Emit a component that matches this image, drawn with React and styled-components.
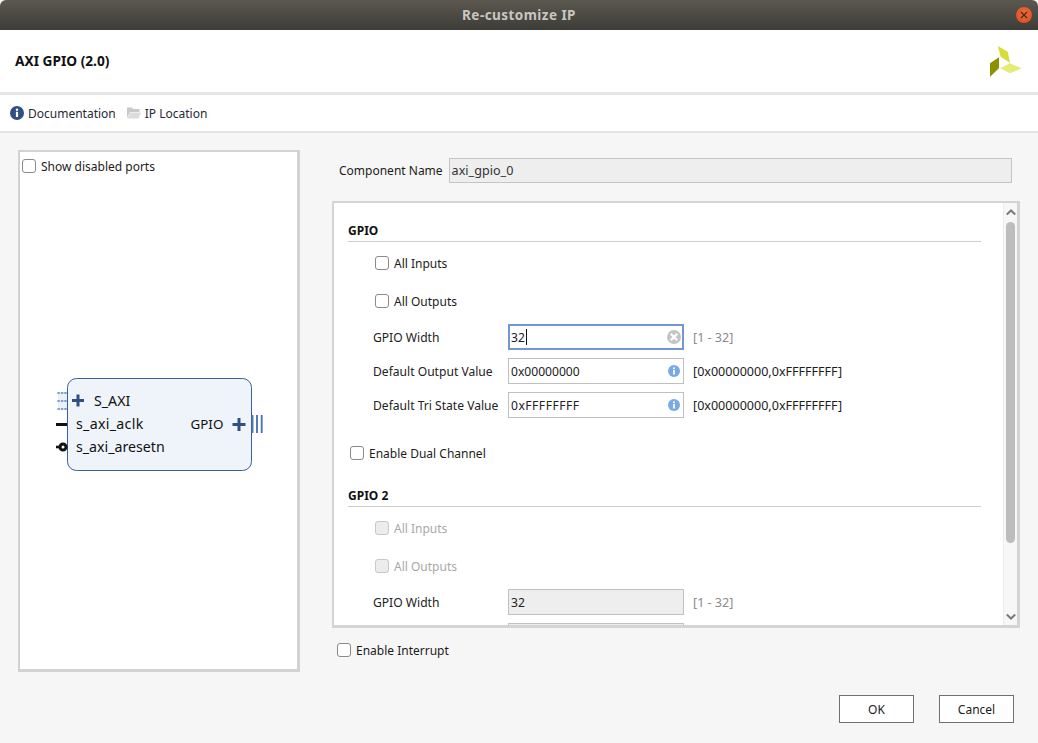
import React from "react";
import styled, { createGlobalStyle } from "styled-components";

const Global = createGlobalStyle`
  html, body { margin: 0; padding: 0; height: 100%; background: #f6f6f6; }
  body { font-family: "Noto Sans", sans-serif; font-size: 12px; color: #1c1c1c; overflow: hidden; }
  * { box-sizing: border-box; }
`;
const Window = styled.div`
  width: 1038px; height: 743px; display: flex; flex-direction: column; background: #f6f6f6;
`;
const TitleBar = styled.div`
  height: 30px; flex: none; position: relative; display: flex; align-items: center; justify-content: center;
  background: linear-gradient(#5b5850, #3e3c37); border-radius: 6px 6px 0 0;
  color: #c8c6c1; font-weight: 700; font-size: 13.5px; letter-spacing: 0.45px;
`;
const CloseButton = styled.div`
  position: absolute; right: 6px; top: 7px; width: 16px; height: 16px; border-radius: 50%;
  background: radial-gradient(circle at 50% 40%, #ee6a3c, #d94a1e); display: flex; align-items: center; justify-content: center;
`;
const Header = styled.div`
  height: 65px; flex: none; background: #fff; border-bottom: 3px solid #e6e6e6; display: flex; align-items: center;
  justify-content: space-between; padding: 0 16px 1px 15px;
`;
const HeaderTitle = styled.div` font-weight: 700; font-size: 13.7px; color: #111; `;
const LogoSvg = styled.svg` margin-top: 2px; `;
const LinkBar = styled.div`
  height: 38px; flex: none; background: #fff; border-bottom: 2px solid #e4e4e4; display: flex; align-items: center;
  padding: 0 0 0 10px;
`;
const LinkItem = styled.div`
  display: flex; align-items: center; gap: 4px; margin-right: 11px; color: #1f2937;
`;
const Body = styled.div`
  flex: 1; display: flex; padding: 17px 18px 0 18px; gap: 32px; min-height: 0; position: relative;
`;
const LeftPanel = styled.div`
  width: 282px; height: 522px; flex: none; background: #fff; border: 2px solid #d2d2d2; border-right-width: 3px; border-bottom-width: 3px;
  display: flex; flex-direction: column; padding: 6px 0 0 2px;
`;
const DiagramHolder = styled.div`
  flex: 1; display: flex; align-items: center; padding: 9px 0 0 34px;
`;
const Right = styled.div`
  flex: 1; display: flex; flex-direction: column; min-width: 0; padding-top: 8px;
`;
const NameRow = styled.div`
  display: flex; align-items: center; padding-left: 7px; gap: 6px; height: 25px; margin-right: 8px;
`;
const NameInput = styled.div`
  flex: 1; height: 25px; background: #eeeeee; border: 1px solid #c4c4c4; display: flex; align-items: center; padding-left: 2px; color: #333; font-size: 12.6px;
`;
const ScrollPanel = styled.div`
  margin-top: 18px; height: 427px; width: 688px; background: #fff; border: 2px solid #d4d4d4; border-right-width: 3px; border-bottom-width: 3px;
  display: flex; overflow: hidden;
`;
const ScrollContent = styled.div`
  flex: 1; min-width: 0; padding: 15px 22px 0 14px; overflow: hidden;
`;
const ScrollTrack = styled.div`
  width: 14px; flex: none; background: #f7f7f7; border-left: 1px solid #ececec; position: relative;
`;
const ScrollThumb = styled.div`
  position: absolute; left: 2px; top: 19px; width: 9px; height: 321px; border-radius: 5px; background: #bdbdbd;
`;
const ScrollArrow = styled.svg`
  position: absolute; left: 2px; ${p => p.$down ? "bottom: 5px;" : "top: 6px;"}
`;
const SectionTitle = styled.div`
  font-weight: 700; font-size: 12px; color: #111; height: 24px; line-height: 25px; border-bottom: 1px solid #cccccc;
  margin-top: ${p => p.$mt || 0}px;
`;
const CheckRow = styled.label`
  display: flex; align-items: center; gap: 5px; height: 16px; margin: ${p => p.$m || "0"};
  padding-left: ${p => p.$indent || 0}px; color: ${p => p.$disabled ? "#a8a8a8" : "inherit"};
`;
const InterruptRow = styled(CheckRow)` padding-left: 5px; margin-top: 14px; `;
const Box = styled.span`
  width: 14px; height: 14px; flex: none; border: 1.5px solid ${p => p.$disabled ? "#c8c8c8" : "#8a8a8a"}; border-radius: 3px;
  background: ${p => p.$disabled ? "#ececec" : "#fff"};
`;
const FieldRow = styled.div`
  display: flex; align-items: center; height: 26px; padding-left: 25px; margin-top: ${p => p.$mt ?? 8}px;
`;
const FieldLabel = styled.div` width: 135px; flex: none; color: #222; font-size: 12.1px; `;
const FieldInput = styled.div`
  width: 176px; height: 26px; flex: none; display: flex; align-items: center; justify-content: space-between;
  padding: 0 3px 0 2px; color: #222; font-size: 12.1px;
  letter-spacing: ${p => p.$wide ? "0.5px" : "normal"};
  background: ${p => p.$disabled ? "#eeeeee" : "#fff"};
  border: ${p => p.$focus ? "2px solid #7396d6" : "1px solid #c0c0c0"};
  ${p => p.$focus ? "padding-left: 1px; padding-right: 1px;" : ""}
`;
const Caret = styled.span` display: inline-block; width: 1px; height: 16px; background: #111; margin-left: 1px; vertical-align: -3px; `;
const RangeText = styled.div` margin-left: 9px; font-size: 12.55px; color: ${p => p.$muted ? "#8b8b8b" : "#1c1c1c"}; `;
const Footer = styled.div`
  position: absolute; right: 24px; top: 562px; display: flex; gap: 25px;
`;
const Btn = styled.button`
  height: 28px; width: ${p => p.$w}px; background: #fff; border: 1px solid #707070; font: inherit; color: #1c1c1c; padding: 0;
`;

const InfoDark = () => (
  <svg width="14" height="14" viewBox="0 0 14 14">
    <circle cx="7" cy="7" r="7" fill="#2f5080" />
    <circle cx="7" cy="3.8" r="1.2" fill="#fff" />
    <rect x="5.9" y="5.8" width="2.2" height="5.2" fill="#fff" />
  </svg>
);
const Folder = () => (
  <svg width="14" height="14" viewBox="0 0 14 14">
    <path d="M0 1.5h5l1 1.5h6.5V6H3L0 12z" fill="#c9c9c9" />
    <path d="M3 6.5h11L11.5 12.5H0.5z" fill="#dcdcdc" />
  </svg>
);
const InfoBlue = () => (
  <svg width="12" height="12" viewBox="0 0 12 12">
    <circle cx="6" cy="6" r="6" fill="#7aaae6" />
    <circle cx="6" cy="3.2" r="1" fill="#fff" />
    <rect x="5.1" y="5" width="1.8" height="4.5" fill="#fff" />
  </svg>
);
const ClearIcon = () => (
  <svg width="14" height="14" viewBox="0 0 14 14">
    <circle cx="7" cy="7" r="7" fill="#c4c4c4" />
    <path d="M3.8 3.8l6.4 6.4M10.2 3.8l-6.4 6.4" stroke="#fff" strokeWidth="2.3" />
  </svg>
);
const Logo = () => (
  <LogoSvg width="32" height="31" viewBox="990 46 32 31">
    <polygon points="997.7,46 1007.7,51.7 1010,62.7 1000.7,56.7" fill="#d6dd35" />
    <polygon points="1000,68.3 1010,63.3 1021.7,68.3 1010,73.3" fill="#e6ea78" />
    <polygon points="999,57.3 999,68.3 990,76.7 990,63.3" fill="#8c9100" />
  </LogoSvg>
);

const Diagram = () => (
  <svg width="214" height="96" viewBox="0 0 214 96" fontFamily="'Noto Sans', sans-serif" fontSize="14.2" fill="#111">
    <rect x="11.5" y="0.5" width="184" height="92" rx="9" fill="#eff4fa" stroke="#3b5f9c" />
    <rect x="2" y="14" width="9" height="18" fill="#eaf1fa" />
    <path d="M1.5 15h9.5M1.5 23h9.5M1.5 31h9.5" stroke="#5b86bb" strokeWidth="1.6" strokeDasharray="2.4 1" fill="none" />
    <path d="M16 22.5h12M22 16.5v12" stroke="#2f5080" strokeWidth="3" />
    <text x="38" y="27.5">S_AXI</text>
    <path d="M0 46.5h11" stroke="#111" strokeWidth="3" />
    <text x="20" y="50.5" letterSpacing="0.3">s_axi_aclk</text>
    <circle cx="7" cy="69" r="3" fill="none" stroke="#111" strokeWidth="3" />
    <path d="M0 69h4" stroke="#111" strokeWidth="2.6" />
    <text x="20" y="73.5">s_axi_aresetn</text>
    <text x="134.5" y="50.5" fontSize="13.4">GPIO</text>
    <path d="M176.5 46.5h13M183 40v13" stroke="#2f5080" strokeWidth="3" />
    <path d="M196.5 37v18M201 37v18M205.7 37v18" stroke="#4b76ad" strokeWidth="1.9" />
  </svg>
);

const Chevron = ({ down }) => (
  <ScrollArrow $down={down} width="10" height="7" viewBox="0 0 10 7">
    <path d={down ? "M0.8 1.5L5 5.5L9.2 1.5" : "M0.8 5.5L5 1.5L9.2 5.5"} fill="none" stroke="#7a7a7a" strokeWidth="2" />
  </ScrollArrow>
);

const Check = ({ children, disabled, ...rest }) => (
  <CheckRow $disabled={disabled} {...rest}>
    <Box $disabled={disabled} />
    <span>{children}</span>
  </CheckRow>
);

export default function App() {
  return (
    <Window>
      <Global />
      <TitleBar>
        Re-customize IP
        <CloseButton>
          <svg width="8" height="8" viewBox="0 0 8 8"><path d="M1 1l6 6M7 1l-6 6" stroke="#4a2a18" strokeWidth="1.2" /></svg>
        </CloseButton>
      </TitleBar>
      <Header>
        <HeaderTitle>AXI GPIO (2.0)</HeaderTitle>
        <Logo />
      </Header>
      <LinkBar>
        <LinkItem><InfoDark />Documentation</LinkItem>
        <LinkItem><Folder />IP Location</LinkItem>
      </LinkBar>
      <Body>
        <LeftPanel>
          <Check>Show disabled ports</Check>
          <DiagramHolder><Diagram /></DiagramHolder>
        </LeftPanel>
        <Right>
          <NameRow>
            Component Name
            <NameInput>axi_gpio_0</NameInput>
          </NameRow>
          <ScrollPanel>
            <ScrollContent>
              <SectionTitle>GPIO</SectionTitle>
              <Check $indent={27} $m="13px 0 0">All Inputs</Check>
              <Check $indent={27} $m="22px 0 0">All Outputs</Check>
              <FieldRow $mt={15}>
                <FieldLabel>GPIO Width</FieldLabel>
                <FieldInput $focus><span>32<Caret /></span><ClearIcon /></FieldInput>
                <RangeText $muted>[1 - 32]</RangeText>
              </FieldRow>
              <FieldRow>
                <FieldLabel>Default Output Value</FieldLabel>
                <FieldInput>0x00000000<InfoBlue /></FieldInput>
                <RangeText>[0x00000000,0xFFFFFFFF]</RangeText>
              </FieldRow>
              <FieldRow>
                <FieldLabel>Default Tri State Value</FieldLabel>
                <FieldInput $wide>0xFFFFFFFF<InfoBlue /></FieldInput>
                <RangeText>[0x00000000,0xFFFFFFFF]</RangeText>
              </FieldRow>
              <Check $indent={2} $m="27px 0 0">Enable Dual Channel</Check>
              <SectionTitle $mt={22}>GPIO 2</SectionTitle>
              <Check disabled $indent={27} $m="13px 0 0">All Inputs</Check>
              <Check disabled $indent={27} $m="22px 0 0">All Outputs</Check>
              <FieldRow $mt={15}>
                <FieldLabel>GPIO Width</FieldLabel>
                <FieldInput $disabled>32</FieldInput>
                <RangeText $muted>[1 - 32]</RangeText>
              </FieldRow>
              <FieldRow>
                <FieldLabel />
                <FieldInput $disabled />
              </FieldRow>
            </ScrollContent>
            <ScrollTrack>
              <Chevron />
              <ScrollThumb />
              <Chevron down />
            </ScrollTrack>
          </ScrollPanel>
          <InterruptRow>
            <Box /><span>Enable Interrupt</span>
          </InterruptRow>
        </Right>
        <Footer>
          <Btn $w={75}>OK</Btn>
          <Btn $w={75}>Cancel</Btn>
        </Footer>
      </Body>
    </Window>
  );
}
